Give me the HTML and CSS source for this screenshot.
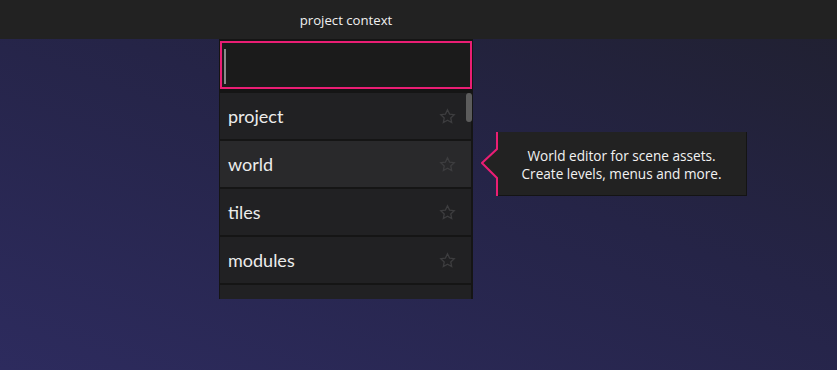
FILE: index.html
```html
<!DOCTYPE html>
<html lang="en">
<head>
    <meta charset="UTF-8">
    <title>project context</title>
    <link rel="stylesheet" href="styles.css">
</head>
<body>
    <!-- barra titolo -->
    <div class="topbar"><span class="title">project context</span></div>

    <div class="stage">
        <div class="panel">
            <div class="search"><span class="caret"></span></div>
            <div class="list">
                <div class="row">project<svg class="star" viewBox="0 0 24 24"><path d="M12 2.5l2.9 6.1 6.6.8-4.9 4.6 1.3 6.6L12 17.3l-5.9 3.3 1.3-6.6-4.9-4.6 6.6-.8z"/></svg></div>
                <div class="row hover">world<svg class="star" viewBox="0 0 24 24"><path d="M12 2.5l2.9 6.1 6.6.8-4.9 4.6 1.3 6.6L12 17.3l-5.9 3.3 1.3-6.6-4.9-4.6 6.6-.8z"/></svg></div>
                <div class="row">tiles<svg class="star" viewBox="0 0 24 24"><path d="M12 2.5l2.9 6.1 6.6.8-4.9 4.6 1.3 6.6L12 17.3l-5.9 3.3 1.3-6.6-4.9-4.6 6.6-.8z"/></svg></div>
                <div class="row">modules<svg class="star" viewBox="0 0 24 24"><path d="M12 2.5l2.9 6.1 6.6.8-4.9 4.6 1.3 6.6L12 17.3l-5.9 3.3 1.3-6.6-4.9-4.6 6.6-.8z"/></svg></div>
                <div class="row"></div>
            </div>
            <div class="scrollbar"></div>
        </div>

        <!-- tooltip della riga sotto il mouse -->
        <div class="tooltip">
            <svg class="arrow" viewBox="0 0 17 64" width="17" height="64">
                <polygon points="16,0 16,17 1,31 16,46 16,64 17,64 17,0" fill="#222222"/>
                <polyline points="16,0 16,17 1,31 16,46 16,64" fill="none" stroke="#ea1e74" stroke-width="2"/>
            </svg>
            World editor for scene assets.<br>
            Create levels, menus and more.
        </div>
    </div>
</body>
</html>
```

FILE: styles.css
```css
html, body {
    height: 100%;
}

body {
    margin: 0;
    font-family: 'Lato', 'Open Sans', sans-serif;
    background: linear-gradient(20deg, #2d2b5e 0%, #252447 55%, #20202f 100%);
    color: #eeeeee;
    display: flex;
    flex-direction: column;
    overflow: hidden;
}

.topbar {
    height: 39px;
    background: #222222;
    display: flex;
    align-items: center;
    flex-shrink: 0;
}

.title {
    margin-left: 219px;
    width: 254px;
    text-align: center;
    font-family: 'Open Sans', sans-serif;
    font-size: 13.2px;
    color: #f0f0f0;
}

.stage {
    position: relative;
    flex: 1;
}

.panel {
    position: relative;
    margin-left: 219px;
    width: 252px;
    height: 257px;
    padding: 2px 1px 1px;
    background: #151515;
    overflow: hidden;
}

.search {
    border: 2px solid #ea1e74;
    background: #1b1b1b;
    padding: 4px 0 0 2px;
    height: 40px;
}

.caret {
    display: block;
    width: 2px;
    height: 35px;
    margin-top: 2px;
    background: #8a8a8a;
}

.list {
    margin-top: 4px;
    display: flex;
    flex-direction: column;
    gap: 2px;
}

.row {
    height: 46px;
    flex-shrink: 0;
    background: #212123;
    display: flex;
    align-items: center;
    justify-content: space-between;
    padding: 0 15px 0 8px;
    font-size: 18px;
    color: #ececec;
    margin-right: 1px;
}

.row.hover {
    background: #29292b;
}

.star {
    width: 17px;
    height: 17px;
    fill: none;
    stroke: #3d3d3f;
    stroke-width: 1.8;
}

.scrollbar {
    position: absolute;
    left: 247px;
    top: 54px;
    width: 6px;
    height: 29px;
    border-radius: 3px;
    background: #5c5c5c;
}

.tooltip {
    position: absolute;
    left: 497px;
    top: 93px;
    width: 250px;
    height: 64px;
    box-sizing: border-box;
    padding-top: 3px;
    background: #222222;
    border-right: 1px solid #141414;
    border-bottom: 1px solid #141414;
    display: flex;
    align-items: center;
    justify-content: center;
    text-align: center;
    font-family: 'Open Sans', sans-serif;
    font-size: 13.6px;
    line-height: 18px;
    color: #f2f2f2;
}

.arrow {
    position: absolute;
    left: -16px;
    top: 0;
}
```
